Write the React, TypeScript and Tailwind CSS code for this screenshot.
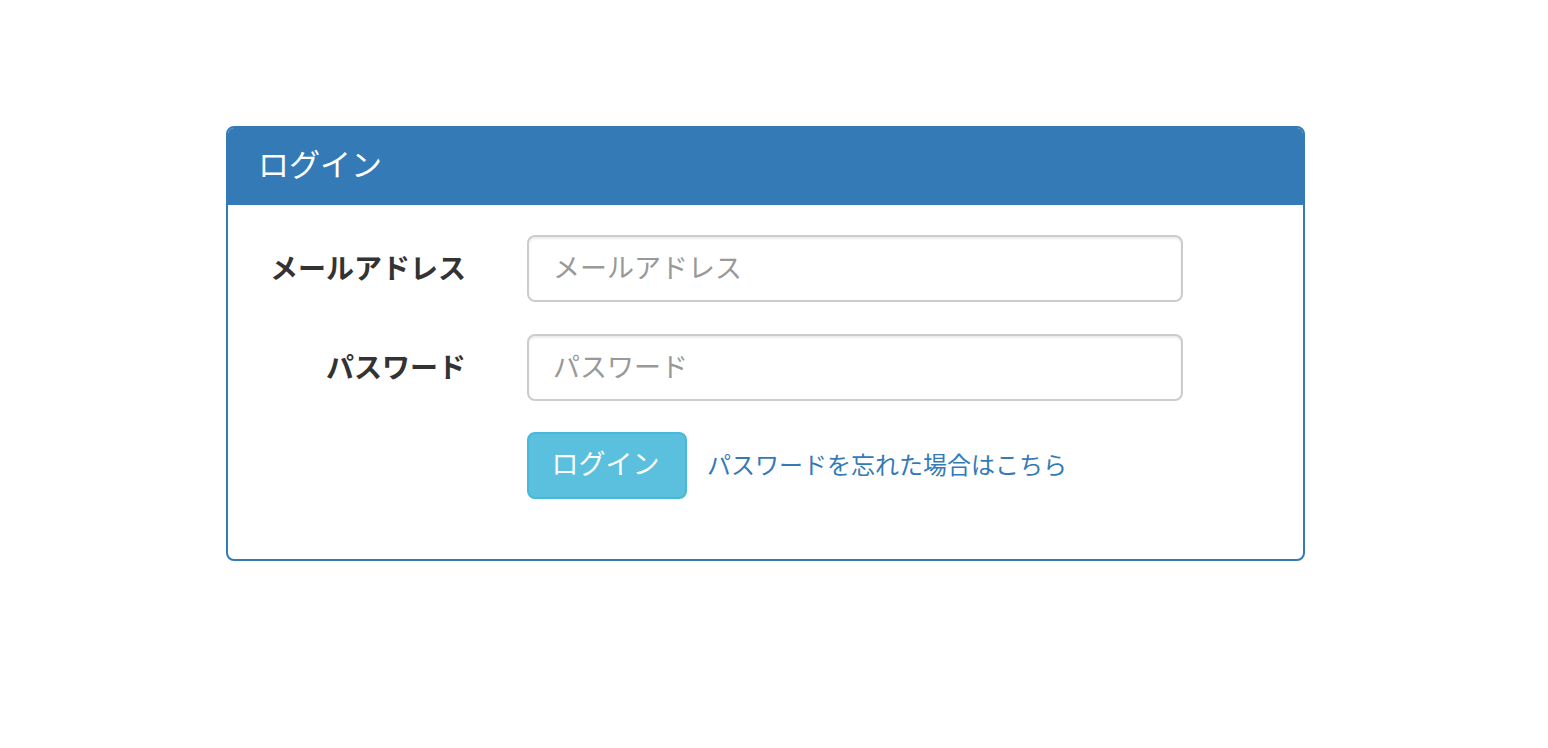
import React from 'react';

const jp = { fontFamily: '"Helvetica Neue", "Noto Sans CJK JP", sans-serif' };

export default function App() {
  return (
    <div className="min-h-[748px] bg-white pt-[126px] pl-[226px]" style={jp}>
      <div className="w-[1079px] rounded-[8px] border-2 border-[#337ab7] bg-white">
        <div className="flex h-[77px] items-center rounded-t-[6px] bg-[#337ab7] px-[30px] pb-[8px]">
          <h3 className="text-[31px] leading-none text-white">ログイン</h3>
        </div>
        <form className="px-[30px] pt-[30px] pb-[60px]" onSubmit={(e) => e.preventDefault()}>
          <div className="mb-[32px] flex items-center">
            <label className="w-[208px] pb-[4px] text-right text-[28px] font-bold text-[#333]">メールアドレス</label>
            <input
              type="email"
              placeholder="メールアドレス"
              className="ml-[61px] h-[67px] w-[656px] rounded-[8px] border-2 border-[#ccc] px-[24px] pb-[4px] text-[27px] text-[#555] shadow-[inset_0_2px_2px_rgba(0,0,0,0.075)] outline-none placeholder:text-[#999]"
            />
          </div>
          <div className="mb-[31px] flex items-center">
            <label className="w-[208px] pb-[4px] text-right text-[28px] font-bold text-[#333]">パスワード</label>
            <input
              type="password"
              placeholder="パスワード"
              className="ml-[61px] h-[67px] w-[656px] rounded-[8px] border-2 border-[#ccc] px-[24px] pb-[4px] text-[27px] text-[#555] shadow-[inset_0_2px_2px_rgba(0,0,0,0.075)] outline-none placeholder:text-[#999]"
            />
          </div>
          <div className="ml-[269px] flex items-center">
            <button
              type="submit"
              className="h-[67px] w-[160px] rounded-[8px] border-2 border-[#46b8da] bg-[#5bc0de] pr-[3px] pb-[4px] text-[27px] text-white"
            >
              ログイン
            </button>
            <a href="#" className="ml-[20px] pb-[4px] text-[24px] text-[#337ab7]">
              パスワードを忘れた場合はこちら
            </a>
          </div>
        </form>
      </div>
    </div>
  );
}
